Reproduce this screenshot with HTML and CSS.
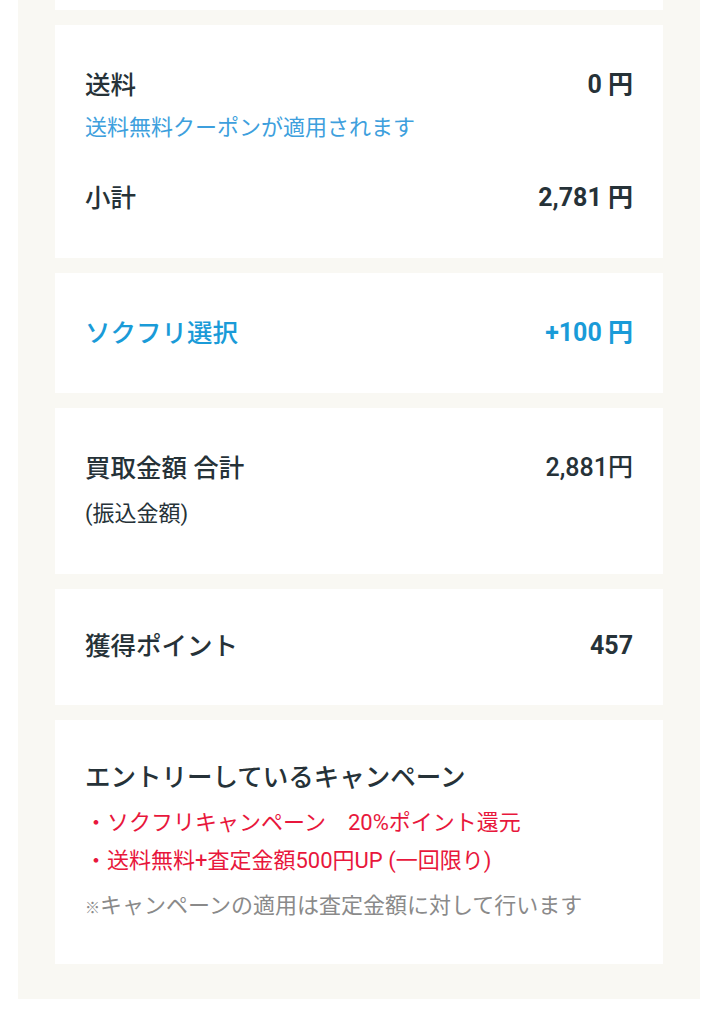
FILE: index.html
```html
<!DOCTYPE html>
<html lang="ja">

<head>
  <meta charset="utf-8">
  <meta name="viewport" content="width=device-width, initial-scale=1.0">
  <title>買取金額</title>
  <link rel="stylesheet" href="styles.css">
</head>

<body>
  <div class="summary">
    <div class="card card-stub"></div>

    <div class="card">
      <div class="row">
        <span class="label">送料</span>
        <span class="price">0 円</span>
      </div>
      <p class="coupon">送料無料クーポンが適用されます</p>
      <div class="row row-subtotal">
        <span class="label">小計</span>
        <span class="price">2,781 円</span>
      </div>
    </div>

    <div class="card">
      <div class="row row-option">
        <span class="label">ソクフリ選択</span>
        <span class="price">+100 円</span>
      </div>
    </div>

    <div class="card">
      <div class="row">
        <span class="label">買取金額 合計</span>
        <span class="total">2,881円</span>
      </div>
      <p class="transfer">(振込金額)</p>
    </div>

    <div class="card card-points">
      <div class="row">
        <span class="label">獲得ポイント</span>
        <span class="price">457</span>
      </div>
    </div>

    <div class="card card-campaign">
      <h3 class="campaign-title">エントリーしているキャンペーン</h3>
      <ul class="campaign-list">
        <li>・ソクフリキャンペーン　20%ポイント還元</li>
        <li>・送料無料+査定金額500円UP (一回限り)</li>
      </ul>
      <p class="campaign-note"><span class="note-mark">※</span>キャンペーンの適用は査定金額に対して行います</p>
    </div>
  </div>
</body>

</html>
```

FILE: styles.css
```css
* {
  box-sizing: border-box;
}

body {
  margin: 0;
  background: #fff;
  color: #263238;
  font-family: Roboto, "Noto Sans CJK JP", sans-serif;
}

.summary {
  margin: 0 18px;
  padding: 0 37px 35px;
  background: #f9f8f3;
  display: flex;
  flex-direction: column;
  gap: 15px;
}

.card {
  background: #fff;
  padding: 45px 30px;
}

.card-stub {
  height: 10px;
  padding: 0;
}

.card-points {
  padding: 42px 30px 44px;
}

.card-campaign {
  padding: 42px 30px 37px;
}

.row {
  display: flex;
  justify-content: space-between;
  align-items: center;
  line-height: 30px;
}

.label {
  font-size: 25.5px;
  font-weight: 500;
}

.price {
  font-size: 25px;
  font-weight: 700;
}

.total {
  font-size: 25px;
  font-weight: 500;
}

.coupon {
  margin: 14px 0 0;
  font-size: 22px;
  line-height: 28px;
  color: #3e9fdd;
}

.row-subtotal {
  margin-top: 41px;
}

.row-option {
  color: #1a9bd8;
}

.transfer {
  margin: 16px 0 0;
  font-size: 22px;
  line-height: 30px;
}

.campaign-title {
  margin: 0;
  font-size: 25.5px;
  font-weight: 500;
  line-height: 30px;
}

.campaign-list {
  list-style: none;
  margin: 12px 0 0;
  padding: 0;
  font-size: 22px;
  line-height: 38px;
  color: #e8173c;
}

.campaign-note {
  margin: 7px 0 0;
  font-size: 22px;
  line-height: 38px;
  color: #8a8a8a;
}

.note-mark {
  font-size: 15px;
}
```
